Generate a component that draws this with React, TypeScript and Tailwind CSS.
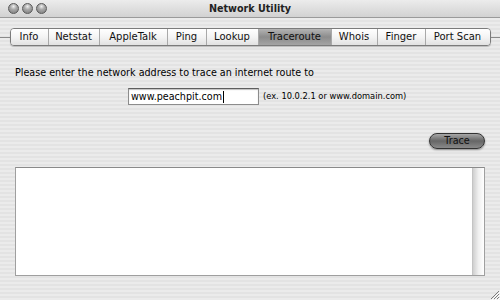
import React from 'react';

const tabs = [
  { name: 'Info', w: 38 },
  { name: 'Netstat', w: 51 },
  { name: 'AppleTalk', w: 68 },
  { name: 'Ping', w: 39 },
  { name: 'Lookup', w: 52 },
  { name: 'Traceroute', w: 73, active: true },
  { name: 'Whois', w: 46 },
  { name: 'Finger', w: 48 },
  { name: 'Port Scan', w: 65 },
];

function Light() {
  return (
    <div className="w-[11px] h-[11px] rounded-full border border-[#5a5a5a] bg-[radial-gradient(circle_at_50%_28%,#eeeeee_0%,#a8a8a8_40%,#7a7a7a_100%)]" />
  );
}

export default function App() {
  return (
    <div
      className="w-[500px] h-[300px] overflow-hidden flex flex-col text-black"
      style={{ fontFamily: '"DejaVu Sans", Verdana, sans-serif' }}
    >
      {/* Title bar */}
      <div className="h-[18px] shrink-0 grid grid-cols-[1fr_auto_1fr] items-center bg-gradient-to-b from-[#ececec] to-[#d2d2d2] border-b border-[#9a9a9a]">
        <div className="flex items-center gap-[3px] pl-[8px]">
          <Light />
          <Light />
          <Light />
        </div>
        <div className="text-[9.6px] font-bold leading-none text-[#222]">Network Utility</div>
        <div />
      </div>

      {/* Body */}
      <div className="flex-1 flex flex-col bg-[repeating-linear-gradient(to_bottom,#ebebeb_0px,#ebebeb_2px,#e3e3e3_2px,#e3e3e3_4px)]">
        {/* Tabs */}
        <div className="mt-[10px] flex items-center h-[18px]">
          <div className="flex-1 h-px bg-[#8a8a8a]" />
          <div className="flex h-[18px] rounded-[4px] border border-[#7b7b7b] overflow-hidden shadow-[0_1px_1px_rgba(0,0,0,0.2)]">
            {tabs.map((t, i) => (
              <div
                key={t.name}
                style={{ width: t.w - (i === 0 ? 1 : 0) }}
                className={`flex items-center justify-center text-[10px] leading-none ${
                  i > 0 ? 'border-l border-[#a9a9a9]' : ''
                } ${
                  t.active
                    ? 'bg-gradient-to-b from-[#b4b4b4] via-[#8c8c8c] to-[#a4a4a4] text-[#111]'
                    : 'bg-gradient-to-b from-[#ffffff] via-[#f4f4f4] to-[#e2e2e2] text-[#111]'
                }`}
              >
                {t.name}
              </div>
            ))}
          </div>
          <div className="flex-1 h-px bg-[#8a8a8a]" />
        </div>

        {/* Label */}
        <div className="mt-[21px] pl-[15px] text-[9.6px] leading-[12px]">
          Please enter the network address to trace an internet route to
        </div>

        {/* Input row */}
        <div className="mt-[9px] flex items-center pl-[128px]">
          <div className="w-[131px] h-[17px] bg-white border border-[#8c8c8c] border-t-[#5e5e5e] shadow-[inset_0_1px_1px_rgba(0,0,0,0.25)] flex items-center pl-[2px] text-[9.6px] leading-none">
            <span>www.peachpit.com</span>
            <span className="w-px h-[12px] bg-black ml-[1px]" />
          </div>
          <span className="ml-[4px] text-[8.3px] leading-none">(ex. 10.0.2.1 or www.domain.com)</span>
        </div>

        {/* Trace button */}
        <div className="mt-[28px] flex justify-end pr-[15px]">
          <div className="w-[56px] h-[16px] rounded-full border border-[#333] bg-gradient-to-b from-[#a8a8a8] via-[#666666] to-[#8a8a8a] shadow-[0_1px_2px_rgba(0,0,0,0.4)] flex items-center justify-center text-[9.6px] leading-none text-[#111]">
            Trace
          </div>
        </div>

        {/* Output area */}
        <div className="mt-[18px] mx-[15px] h-[109px] bg-white border border-[#9f9f9f] border-t-[#8a8a8a] flex justify-end">
          <div className="w-[12px] h-full border-l border-[#c4c4c4] bg-gradient-to-r from-[#cfcfcf] via-[#f0f0f0] to-[#ffffff]" />
        </div>

        {/* Resize grip */}
        <div className="flex-1 flex justify-end items-end">
          <svg width="12" height="12" viewBox="0 0 12 12">
            <path d="M11 3 L3 11 M11 6 L6 11 M11 9 L9 11" stroke="#7a7a7a" strokeWidth="1" />
            <path d="M12 4 L4 12 M12 7 L7 12 M12 10 L10 12" stroke="#ffffff" strokeWidth="1" />
          </svg>
        </div>
      </div>
    </div>
  );
}
